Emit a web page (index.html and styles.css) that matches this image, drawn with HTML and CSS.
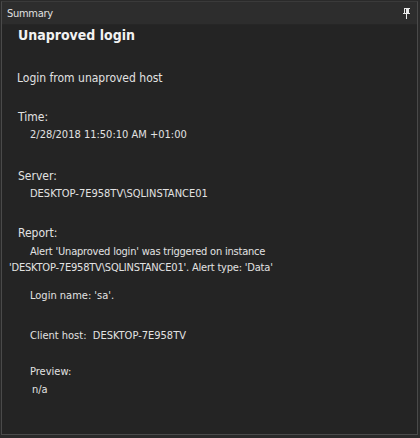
FILE: index.html
```html
<!DOCTYPE html>
<html>
<head>
<meta charset="utf-8">
<link rel="stylesheet" href="styles.css">
</head>
<body>
<div class="frame">
  <div class="panel">
    <div class="header">
      <span class="header-title">Summary</span>
      <svg class="pin" width="8" height="11" viewBox="0 0 8 11">
        <path d="M1 0h6v1H6v4h1v1H4v5H3V6H0V5h1V1H1z M2 1v4h1V1z" fill="#e8e8e8" fill-rule="evenodd"/>
      </svg>
    </div>
    <div class="content">
      <div class="title">Unaproved login</div>
      <div class="desc">Login from unaproved host</div>
      <div class="label lbl-time">Time:</div>
      <div class="value">2/28/2018 11:50:10 AM +01:00</div>
      <div class="label lbl-server">Server:</div>
      <div class="value">DESKTOP-7E958TV\SQLINSTANCE01</div>
      <div class="label lbl-report">Report:</div>
      <div class="report">Alert 'Unaproved login' was triggered on instance<br>'DESKTOP-7E958TV\SQLINSTANCE01'. Alert type: 'Data'</div>
      <div class="detail d-login">Login name: 'sa'.</div>
      <div class="detail d-client">Client host:&nbsp; DESKTOP-7E958TV</div>
      <div class="detail d-preview">Preview:</div>
      <div class="preview-val">n/a</div>
    </div>
  </div>
</div>
</body>
</html>
```
FILE: styles.css
```css
html, body {
  margin: 0;
  padding: 0;
  background: #2a2a2a;
}
.frame {
  width: 420px;
  height: 438px;
  box-sizing: border-box;
  padding: 1px 2px 3px 1px;
  background: #2a2a2a;
  font-family: "DejaVu Sans Condensed", "DejaVu Sans", sans-serif;
  font-stretch: condensed;
  color: #e2e2e2;
}
.panel {
  height: 100%;
  box-sizing: border-box;
  border: 1px solid #4a4a4a;
  border-top-color: #3a3a3a;
  background: #242424;
  display: flex;
  flex-direction: column;
}
.header {
  height: 22px;
  flex: none;
  background: #2d2d2d;
  display: flex;
  align-items: center;
  justify-content: space-between;
  padding: 0 6px 0 5px;
  border-bottom: 1px solid #262626;
}
.header-title {
  font-size: 11px;
  letter-spacing: -0.3px;
  color: #e0e0e0;
}
.pin {
  display: block;
  margin-top: 1px;
}
.content {
  flex: 1;
  padding: 0 0 0 6px;
  font-size: 11px;
  line-height: 16px;
}
.title {
  font-size: 14px;
  font-weight: bold;
  color: #f2f2f2;
  margin: 1px 0 0 10px;
  line-height: 18px;
}
.desc {
  font-size: 12px;
  margin: 26px 0 0 9px;
}
.label {
  font-size: 12px;
  margin-left: 10px;
}
.lbl-time { margin-top: 23px; }
.lbl-server { margin-top: 25px; }
.lbl-report { margin-top: 23px; }
.value {
  margin: 2px 0 0 22px;
}
.report {
  margin-top: 3px;
  text-indent: 21px;
  padding-left: 1px;
  letter-spacing: -0.2px;
}
.detail {
  margin-left: 22px;
}
.d-login { margin-top: 12px; }
.d-client { margin-top: 24px; }
.d-preview { margin-top: 20px; }
.preview-val {
  margin: 2px 0 0 24px;
}
```
